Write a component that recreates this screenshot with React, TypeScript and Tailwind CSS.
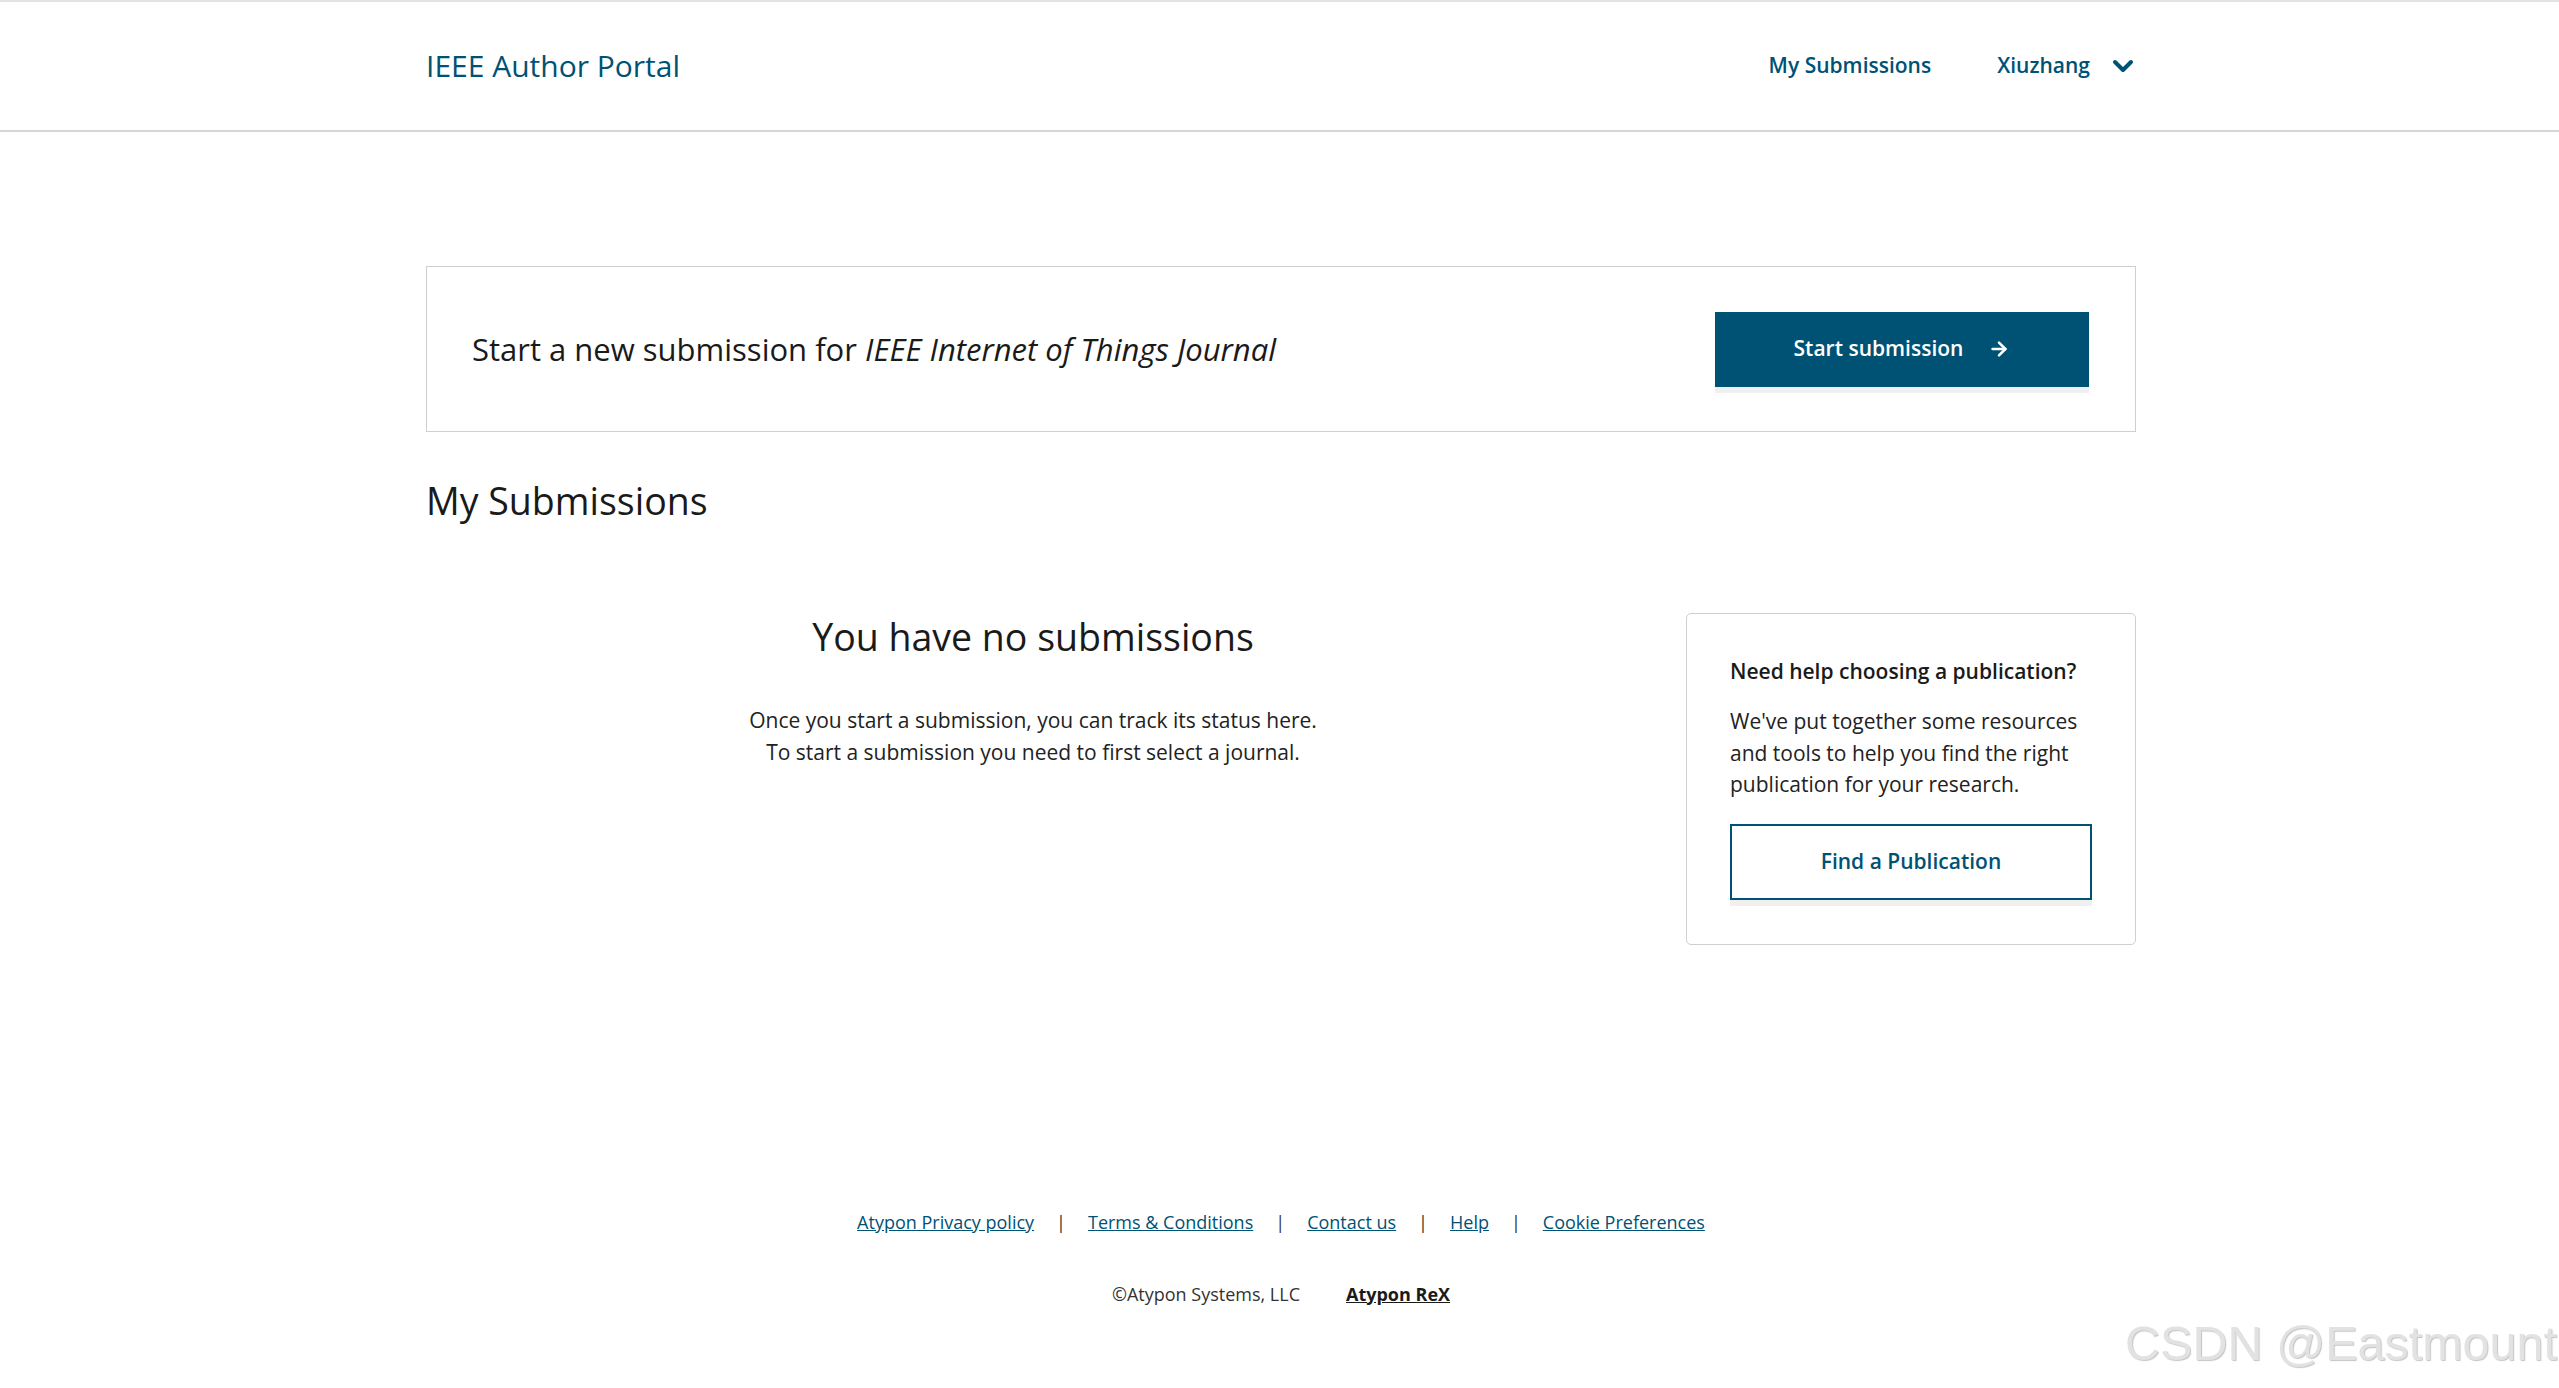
import { ArrowRight } from "lucide-react";

const teal = "text-[#005274]";

function Header() {
  return (
    <header className="h-[132px] border-t-2 border-b-2 border-t-[#e3e3e3] border-b-[#d6d6d6] bg-white">
      <div className="mx-auto flex h-full w-[1713px] items-center justify-between pl-[3px]">
        <a className={`text-[30px] leading-none ${teal}`}>IEEE Author Portal</a>
        <nav className="flex items-center pr-[2px]">
          <a className={`text-[21px] font-semibold ${teal}`}>My Submissions</a>
          <button className={`ml-[66px] flex items-center text-[21px] font-semibold ${teal}`}>
            Xiuzhang
            <svg className="ml-[22px]" width="22" height="16" viewBox="0 0 22 16" fill="none">
              <polyline points="3,4 11,12 19,4" stroke="#005274" strokeWidth="4" strokeLinecap="round" strokeLinejoin="round" />
            </svg>
          </button>
        </nav>
      </div>
    </header>
  );
}

function Footer() {
  const links = ["Atypon Privacy policy", "Terms & Conditions", "Contact us", "Help", "Cookie Preferences"];
  return (
    <footer className="mt-[264px] flex flex-col items-center text-[18px] leading-[27px]">
      <div className="flex items-center gap-[22px]">
        {links.map((l, i) => (
          <div key={l} className="flex items-center gap-[22px]">
            {i > 0 && <span className="text-[#333]">|</span>}
            <a className={`underline ${teal}`}>{l}</a>
          </div>
        ))}
      </div>
      <div className="mt-[45px] flex items-center gap-[46px] text-[#333]">
        <span>©Atypon Systems, LLC</span>
        <a className="font-bold text-[#1a1a1a] underline">Atypon ReX</a>
      </div>
    </footer>
  );
}

export default function App() {
  return (
    <div className="relative min-h-[1388px] bg-white font-['Open_Sans',sans-serif] text-[#222]">
      <Header />

      <main className="mx-auto w-[1713px] pl-[3px]">
        {/* new submission banner */}
        <section className="mt-[134px] flex h-[166px] items-center justify-between border border-[#cfcfcf] pl-[45px] pr-[46px]">
          <p className="text-[31px] leading-[44px] text-[#1a1a1a]">
            Start a new submission for <em>IEEE Internet of Things Journal</em>
          </p>
          <button className="flex h-[75px] w-[374px] items-center justify-center gap-[25px] bg-[#005274] text-[21px] font-semibold text-white shadow-[0_6px_0_#f0f0f0]">
            Start submission
            <ArrowRight size={22} strokeWidth={2.75} />
          </button>
        </section>

        <h1 className="mt-[45px] text-[37.5px] leading-[47px] text-[#1a1a1a]">My Submissions</h1>

        <div className="mt-[89px] flex items-start gap-[46px]">
          <div className="flex-1 text-center">
            <h2 className="text-[37.5px] leading-[47px] text-[#1a1a1a]">You have no submissions</h2>
            <p className="mt-[44px] text-[21px] leading-[32px] text-[#222]">
              Once you start a submission, you can track its status here.
              <br />
              To start a submission you need to first select a journal.
            </p>
          </div>

          <aside className="w-[450px] rounded-[5px] border border-[#cfcfcf] px-[43px] pt-[41px] pb-[44px]">
            <h3 className="text-[21px] font-semibold leading-[32px] text-[#1a1a1a]">Need help choosing a publication?</h3>
            <p className="mt-[19px] text-[21px] leading-[31.5px] text-[#222]">
              We've put together some resources and tools to help you find the right publication for your research.
            </p>
            <button className={`mt-[23px] h-[76px] w-full border-2 border-[#005274] text-[21px] font-semibold shadow-[0_6px_0_#f0f0f0] ${teal}`}>
              Find a Publication
            </button>
          </aside>
        </div>

        <Footer />
      </main>

      {/* watermark from the screenshot source */}
      <div className="absolute top-[1319px] right-[2px] font-['Liberation_Sans',sans-serif] text-[48.5px] leading-none text-[#e2e2e2] [text-shadow:1px_1px_1px_#c4c4c4]">
        CSDN @Eastmount
      </div>
    </div>
  );
}
